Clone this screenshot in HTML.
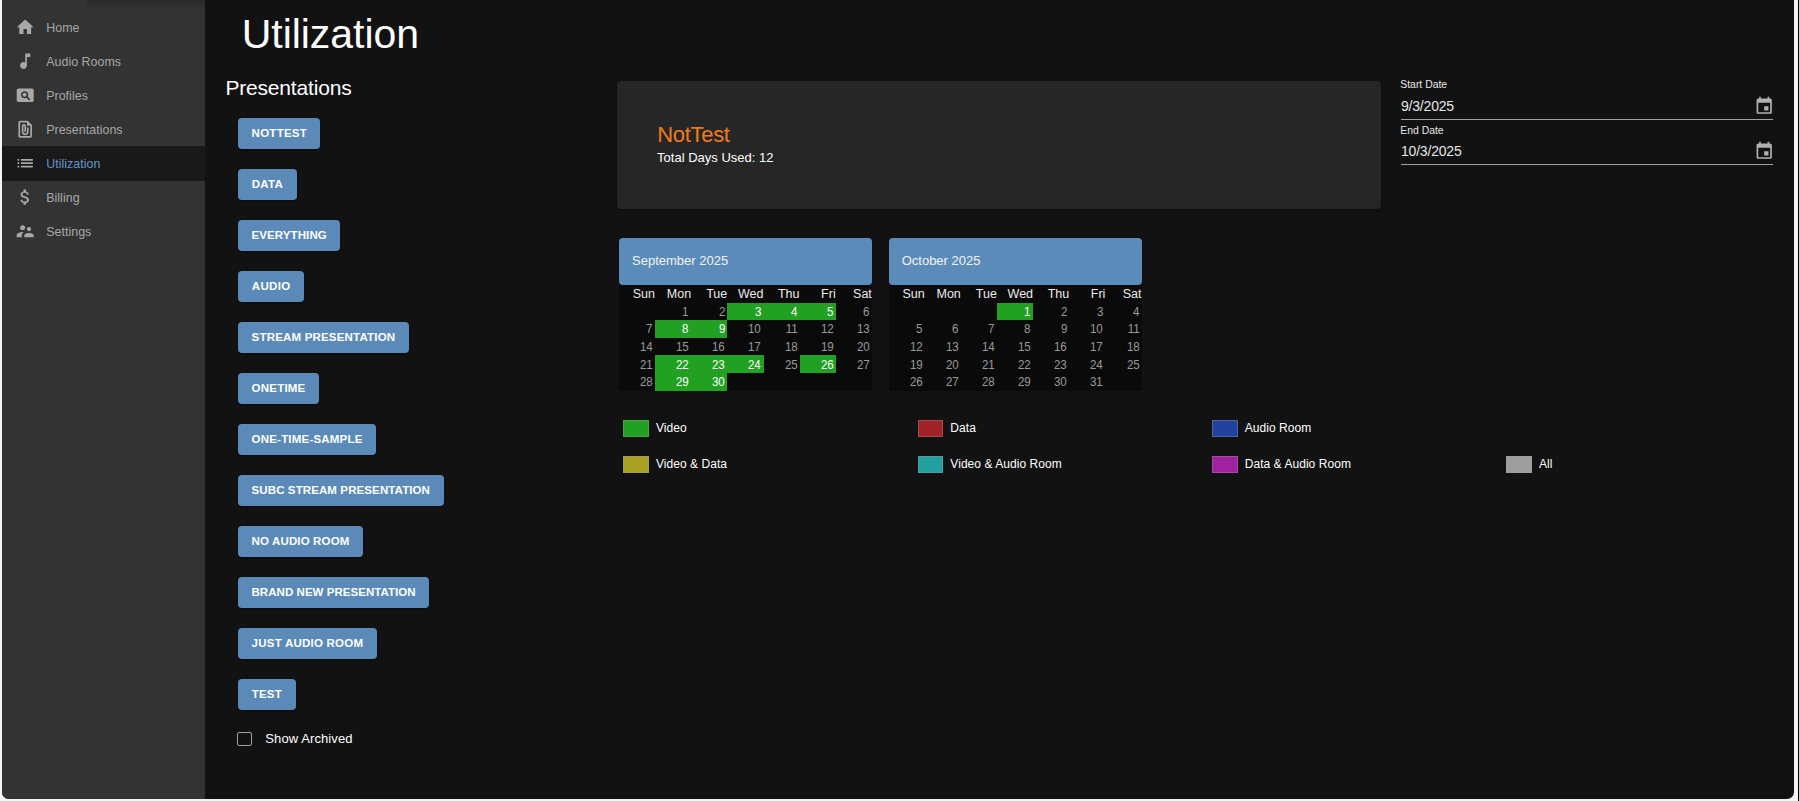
<!DOCTYPE html>
<html><head><meta charset="utf-8"><style>
html,body{margin:0;padding:0;width:1799px;height:801px;overflow:hidden;background:#f4f4f4;font-family:"Liberation Sans", sans-serif}
.t{position:absolute;white-space:nowrap;line-height:1;font-family:"Liberation Sans", sans-serif}
.b{position:absolute}
.btn{position:absolute;left:238px;height:31px;line-height:31px;padding:0;text-align:center;background:#5b8ab8;color:#fff;font-family:"Liberation Sans", sans-serif;font-weight:700;font-size:11.5px;letter-spacing:0.3px;border-radius:4px;white-space:nowrap;box-sizing:border-box;box-shadow:0 1px 2px rgba(0,0,0,.4)}
</style></head><body>
<div class="b" style="left:2.00px;top:-10.00px;width:1792.00px;height:808.50px;background:#121212;border-radius:7px;overflow:hidden"></div>
<div class="b" style="left:2.00px;top:-10.00px;width:203.00px;height:808.50px;background:#333333;border-radius:0 0 0 7px"></div>
<div class="b" style="left:1798.00px;top:0.00px;width:1.00px;height:801.00px;background:#000;"></div>
<div class="b" style="left:87.00px;top:0.00px;width:118.00px;height:9.00px;background:linear-gradient(#292929,rgba(51,51,51,0));"></div>
<svg class="b" style="left:15.20px;top:17.10px" width="20.4" height="20.4" viewBox="0 0 24 24" fill="#a8a8a8"><path d="M10 20v-6h4v6h5v-8h3L12 3 2 12h3v8z"/></svg>
<div class="t" style="left:46.20px;top:21.90px;font-size:12.4px;color:#a8a8a8;font-weight:400;letter-spacing:0.05px;">Home</div>
<svg class="b" style="left:15.20px;top:51.10px" width="20.4" height="20.4" viewBox="0 0 24 24" fill="#a8a8a8"><path d="M12 3v10.55c-.59-.34-1.27-.55-2-.55-2.21 0-4 1.79-4 4s1.79 4 4 4 4-1.79 4-4V7h4V3h-6z"/></svg>
<div class="t" style="left:46.20px;top:55.90px;font-size:12.4px;color:#a8a8a8;font-weight:400;letter-spacing:0.05px;">Audio Rooms</div>
<svg class="b" style="left:15.20px;top:85.10px" width="20.4" height="20.4" viewBox="0 0 24 24" fill="#a8a8a8"><rect x="2" y="4" width="20" height="16" rx="2"/><circle cx="11.3" cy="11.5" r="3.3" fill="none" stroke="#333" stroke-width="1.8"/><path d="M13.8 14l3 3" stroke="#333" stroke-width="1.9" stroke-linecap="round"/></svg>
<div class="t" style="left:46.20px;top:89.90px;font-size:12.4px;color:#a8a8a8;font-weight:400;letter-spacing:0.05px;">Profiles</div>
<svg class="b" style="left:15.20px;top:119.10px" width="20.4" height="20.4" viewBox="0 0 24 24" fill="#a8a8a8"><path d="M15 2H6c-1.1 0-2 .9-2 2v16c0 1.1.9 2 2 2h12c1.1 0 2-.9 2-2V7l-5-5zM6 20V4h8v4h4v12H6zm10-10v5c0 2.21-1.79 4-4 4s-4-1.79-4-4V8.5c0-1.47 1.26-2.64 2.76-2.49 1.3.13 2.24 1.32 2.24 2.63V15h-2V8.5c0-.28-.22-.5-.5-.5s-.5.22-.5.5V15c0 1.1.9 2 2 2s2-.9 2-2v-5h2z"/></svg>
<div class="t" style="left:46.20px;top:123.90px;font-size:12.4px;color:#a8a8a8;font-weight:400;letter-spacing:0.05px;">Presentations</div>
<div class="b" style="left:2.00px;top:146.00px;width:203.00px;height:35.00px;background:#191919;"></div>
<svg class="b" style="left:15.20px;top:153.10px" width="20.4" height="20.4" viewBox="0 0 24 24" fill="#a8a8a8"><path d="M3 13h2v-2H3v2zm0 4h2v-2H3v2zm0-8h2V7H3v2zm4 4h14v-2H7v2zm0 4h14v-2H7v2zM7 7v2h14V7H7z"/></svg>
<div class="t" style="left:46.20px;top:157.90px;font-size:12.4px;color:#6196c9;font-weight:400;letter-spacing:0.05px;">Utilization</div>
<svg class="b" style="left:15.20px;top:187.10px" width="20.4" height="20.4" viewBox="0 0 24 24" fill="#a8a8a8"><path d="M11.8 10.9c-2.27-.59-3-1.2-3-2.15 0-1.09 1.01-1.85 2.7-1.85 1.78 0 2.44.85 2.5 2.1h2.21c-.07-1.72-1.12-3.3-3.21-3.81V3h-3v2.16c-1.94.42-3.5 1.68-3.5 3.61 0 2.31 1.91 3.46 4.7 4.13 2.5.6 3 1.48 3 2.41 0 .69-.49 1.79-2.7 1.79-2.06 0-2.87-.92-2.98-2.1h-2.2c.12 2.19 1.76 3.42 3.68 3.83V21h3v-2.15c1.95-.37 3.5-1.5 3.5-3.55 0-2.84-2.43-3.81-4.7-4.4z"/></svg>
<div class="t" style="left:46.20px;top:191.90px;font-size:12.4px;color:#a8a8a8;font-weight:400;letter-spacing:0.05px;">Billing</div>
<svg class="b" style="left:15.20px;top:221.10px" width="20.4" height="20.4" viewBox="0 0 24 24" fill="#a8a8a8"><path d="M16.5 12c1.38 0 2.49-1.12 2.49-2.5S17.88 7 16.5 7C15.12 7 14 8.12 14 9.5s1.12 2.5 2.5 2.5zM9 11c1.66 0 2.99-1.34 2.99-3S10.66 5 9 5C7.34 5 6 6.34 6 8s1.34 3 3 3zm7.5 3c-1.83 0-5.5.92-5.5 2.75V19h11v-2.25c0-1.83-3.67-2.75-5.5-2.75zM9 13c-2.33 0-7 1.17-7 3.5V19h6v-2.25c0-.85.33-2.34 2.37-3.47C9.5 13.1 8.66 13 9 13z"/></svg>
<div class="t" style="left:46.20px;top:225.90px;font-size:12.4px;color:#a8a8a8;font-weight:400;letter-spacing:0.05px;">Settings</div>
<div class="t" style="left:241.80px;top:13.89px;font-size:41px;color:#ffffff;font-weight:400;letter-spacing:-0.05px;">Utilization</div>
<div class="t" style="left:225.40px;top:77.12px;font-size:21px;color:#ffffff;font-weight:400;letter-spacing:-0.18px;">Presentations</div>
<div class="btn" style="top:118.00px;width:82.4px;letter-spacing:0.247px;text-indent:0.247px">NOTTEST</div>
<div class="btn" style="top:168.96px;width:58.5px;letter-spacing:0.316px;text-indent:0.316px">DATA</div>
<div class="btn" style="top:219.92px;width:102.3px;letter-spacing:0.096px;text-indent:0.096px">EVERYTHING</div>
<div class="btn" style="top:270.88px;width:66px;letter-spacing:0.388px;text-indent:0.388px">AUDIO</div>
<div class="btn" style="top:321.84px;width:170.7px;letter-spacing:0.187px;text-indent:0.187px">STREAM PRESENTATION</div>
<div class="btn" style="top:372.80px;width:80.9px;letter-spacing:0.216px;text-indent:0.216px">ONETIME</div>
<div class="btn" style="top:423.76px;width:138px;letter-spacing:0.201px;text-indent:0.201px">ONE-TIME-SAMPLE</div>
<div class="btn" style="top:474.72px;width:205.5px;letter-spacing:0.107px;text-indent:0.107px">SUBC STREAM PRESENTATION</div>
<div class="btn" style="top:525.68px;width:124.9px;letter-spacing:0.143px;text-indent:0.143px">NO AUDIO ROOM</div>
<div class="btn" style="top:576.64px;width:191.2px;letter-spacing:0.048px;text-indent:0.048px">BRAND NEW PRESENTATION</div>
<div class="btn" style="top:627.60px;width:138.7px;letter-spacing:0.233px;text-indent:0.233px">JUST AUDIO ROOM</div>
<div class="btn" style="top:678.56px;width:57.5px;letter-spacing:0.277px;text-indent:0.277px">TEST</div>
<div class="b" style="left:236.80px;top:731.80px;width:15.20px;height:14.60px;background:transparent;border:1.8px solid #a0a0a0;border-radius:2px;box-sizing:border-box"></div>
<div class="t" style="left:265.30px;top:731.90px;font-size:13px;color:#ffffff;font-weight:400;letter-spacing:0.1px;">Show Archived</div>
<div class="b" style="left:617.00px;top:80.60px;width:764.40px;height:128.00px;background:#262626;border-radius:4px;box-shadow:0 1px 3px rgba(0,0,0,.4)"></div>
<div class="t" style="left:657.20px;top:123.58px;font-size:22px;color:#f07b1c;font-weight:400;letter-spacing:-0.3px;">NotTest</div>
<div class="t" style="left:657.10px;top:150.90px;font-size:13px;color:#ffffff;font-weight:400;letter-spacing:0px;">Total Days Used: 12</div>
<div class="t" style="left:1400.30px;top:79.50px;font-size:10.4px;color:#e6e6e6;font-weight:400;letter-spacing:0px;">Start Date</div>
<div class="t" style="left:1401.00px;top:99.35px;font-size:14px;color:#e6e6e6;font-weight:400;letter-spacing:-0.2px;">9/3/2025</div>
<div class="b" style="left:1401.00px;top:119.00px;width:372.00px;height:1.00px;background:#a0a0a0;"></div>
<svg class="b" style="left:1753.80px;top:95.80px" width="20.4" height="20.4" viewBox="0 0 24 24" fill="#b0b0b0"><path d="M17 12h-5v5h5v-5zM16 1v2H8V1H6v2H5c-1.11 0-1.99.9-1.99 2L3 19c0 1.1.89 2 2 2h14c1.1 0 2-.9 2-2V5c0-1.1-.9-2-2-2h-1V1h-2zm3 18H5V8h14v11z"/></svg>
<div class="t" style="left:1400.30px;top:126.16px;font-size:10.4px;color:#e6e6e6;font-weight:400;letter-spacing:0px;">End Date</div>
<div class="t" style="left:1401.00px;top:144.24px;font-size:14px;color:#e6e6e6;font-weight:400;letter-spacing:-0.2px;">10/3/2025</div>
<div class="b" style="left:1401.00px;top:164.30px;width:372.00px;height:1.00px;background:#a0a0a0;"></div>
<svg class="b" style="left:1753.80px;top:141.10px" width="20.4" height="20.4" viewBox="0 0 24 24" fill="#b0b0b0"><path d="M17 12h-5v5h5v-5zM16 1v2H8V1H6v2H5c-1.11 0-1.99.9-1.99 2L3 19c0 1.1.89 2 2 2h14c1.1 0 2-.9 2-2V5c0-1.1-.9-2-2-2h-1V1h-2zm3 18H5V8h14v11z"/></svg>
<div class="b" style="left:619.00px;top:285.00px;width:253.00px;height:105.60px;background:#0a0a0a;"></div>
<div class="b" style="left:619.00px;top:238.00px;width:253.00px;height:47.00px;background:#5b8cb9;border-radius:4px"></div>
<div class="t" style="left:632.00px;top:254.00px;font-size:13px;color:#f2f2f2;font-weight:400;letter-spacing:0px;">September 2025</div>
<div class="t" style="right:1144.06px;top:287.82px;font-size:12.5px;color:#ececec;font-weight:400;letter-spacing:0px;text-align:right;">Sun</div>
<div class="t" style="right:1107.91px;top:287.82px;font-size:12.5px;color:#ececec;font-weight:400;letter-spacing:0px;text-align:right;">Mon</div>
<div class="t" style="right:1071.77px;top:287.82px;font-size:12.5px;color:#ececec;font-weight:400;letter-spacing:0px;text-align:right;">Tue</div>
<div class="t" style="right:1035.63px;top:287.82px;font-size:12.5px;color:#ececec;font-weight:400;letter-spacing:0px;text-align:right;">Wed</div>
<div class="t" style="right:999.49px;top:287.82px;font-size:12.5px;color:#ececec;font-weight:400;letter-spacing:0px;text-align:right;">Thu</div>
<div class="t" style="right:963.34px;top:287.82px;font-size:12.5px;color:#ececec;font-weight:400;letter-spacing:0px;text-align:right;">Fri</div>
<div class="t" style="right:927.20px;top:287.82px;font-size:12.5px;color:#ececec;font-weight:400;letter-spacing:0px;text-align:right;">Sat</div>
<div class="t" style="right:1110.11px;top:304.84px;font-size:13.3px;color:#9a9a9a;font-weight:400;letter-spacing:0px;text-align:right;transform:scaleX(.87);transform-origin:100% 50%">1</div>
<div class="t" style="right:1073.97px;top:304.84px;font-size:13.3px;color:#9a9a9a;font-weight:400;letter-spacing:0px;text-align:right;transform:scaleX(.87);transform-origin:100% 50%">2</div>
<div class="b" style="left:727.43px;top:302.60px;width:36.14px;height:17.60px;background:#22a022;"></div>
<div class="t" style="right:1037.83px;top:304.84px;font-size:13.3px;color:#ffffff;font-weight:400;letter-spacing:0px;text-align:right;transform:scaleX(.87);transform-origin:100% 50%">3</div>
<div class="b" style="left:763.57px;top:302.60px;width:36.14px;height:17.60px;background:#22a022;"></div>
<div class="t" style="right:1001.69px;top:304.84px;font-size:13.3px;color:#ffffff;font-weight:400;letter-spacing:0px;text-align:right;transform:scaleX(.87);transform-origin:100% 50%">4</div>
<div class="b" style="left:799.71px;top:302.60px;width:36.14px;height:17.60px;background:#22a022;"></div>
<div class="t" style="right:965.54px;top:304.84px;font-size:13.3px;color:#ffffff;font-weight:400;letter-spacing:0px;text-align:right;transform:scaleX(.87);transform-origin:100% 50%">5</div>
<div class="t" style="right:929.40px;top:304.84px;font-size:13.3px;color:#9a9a9a;font-weight:400;letter-spacing:0px;text-align:right;transform:scaleX(.87);transform-origin:100% 50%">6</div>
<div class="t" style="right:1146.26px;top:322.44px;font-size:13.3px;color:#9a9a9a;font-weight:400;letter-spacing:0px;text-align:right;transform:scaleX(.87);transform-origin:100% 50%">7</div>
<div class="b" style="left:655.14px;top:320.20px;width:36.14px;height:17.60px;background:#22a022;"></div>
<div class="t" style="right:1110.11px;top:322.44px;font-size:13.3px;color:#ffffff;font-weight:400;letter-spacing:0px;text-align:right;transform:scaleX(.87);transform-origin:100% 50%">8</div>
<div class="b" style="left:691.29px;top:320.20px;width:36.14px;height:17.60px;background:#22a022;"></div>
<div class="t" style="right:1073.97px;top:322.44px;font-size:13.3px;color:#ffffff;font-weight:400;letter-spacing:0px;text-align:right;transform:scaleX(.87);transform-origin:100% 50%">9</div>
<div class="t" style="right:1037.83px;top:322.44px;font-size:13.3px;color:#9a9a9a;font-weight:400;letter-spacing:0px;text-align:right;transform:scaleX(.87);transform-origin:100% 50%">10</div>
<div class="t" style="right:1001.69px;top:322.44px;font-size:13.3px;color:#9a9a9a;font-weight:400;letter-spacing:0px;text-align:right;transform:scaleX(.87);transform-origin:100% 50%">11</div>
<div class="t" style="right:965.54px;top:322.44px;font-size:13.3px;color:#9a9a9a;font-weight:400;letter-spacing:0px;text-align:right;transform:scaleX(.87);transform-origin:100% 50%">12</div>
<div class="t" style="right:929.40px;top:322.44px;font-size:13.3px;color:#9a9a9a;font-weight:400;letter-spacing:0px;text-align:right;transform:scaleX(.87);transform-origin:100% 50%">13</div>
<div class="t" style="right:1146.26px;top:340.04px;font-size:13.3px;color:#9a9a9a;font-weight:400;letter-spacing:0px;text-align:right;transform:scaleX(.87);transform-origin:100% 50%">14</div>
<div class="t" style="right:1110.11px;top:340.04px;font-size:13.3px;color:#9a9a9a;font-weight:400;letter-spacing:0px;text-align:right;transform:scaleX(.87);transform-origin:100% 50%">15</div>
<div class="t" style="right:1073.97px;top:340.04px;font-size:13.3px;color:#9a9a9a;font-weight:400;letter-spacing:0px;text-align:right;transform:scaleX(.87);transform-origin:100% 50%">16</div>
<div class="t" style="right:1037.83px;top:340.04px;font-size:13.3px;color:#9a9a9a;font-weight:400;letter-spacing:0px;text-align:right;transform:scaleX(.87);transform-origin:100% 50%">17</div>
<div class="t" style="right:1001.69px;top:340.04px;font-size:13.3px;color:#9a9a9a;font-weight:400;letter-spacing:0px;text-align:right;transform:scaleX(.87);transform-origin:100% 50%">18</div>
<div class="t" style="right:965.54px;top:340.04px;font-size:13.3px;color:#9a9a9a;font-weight:400;letter-spacing:0px;text-align:right;transform:scaleX(.87);transform-origin:100% 50%">19</div>
<div class="t" style="right:929.40px;top:340.04px;font-size:13.3px;color:#9a9a9a;font-weight:400;letter-spacing:0px;text-align:right;transform:scaleX(.87);transform-origin:100% 50%">20</div>
<div class="t" style="right:1146.26px;top:357.64px;font-size:13.3px;color:#9a9a9a;font-weight:400;letter-spacing:0px;text-align:right;transform:scaleX(.87);transform-origin:100% 50%">21</div>
<div class="b" style="left:655.14px;top:355.40px;width:36.14px;height:17.60px;background:#22a022;"></div>
<div class="t" style="right:1110.11px;top:357.64px;font-size:13.3px;color:#ffffff;font-weight:400;letter-spacing:0px;text-align:right;transform:scaleX(.87);transform-origin:100% 50%">22</div>
<div class="b" style="left:691.29px;top:355.40px;width:36.14px;height:17.60px;background:#22a022;"></div>
<div class="t" style="right:1073.97px;top:357.64px;font-size:13.3px;color:#ffffff;font-weight:400;letter-spacing:0px;text-align:right;transform:scaleX(.87);transform-origin:100% 50%">23</div>
<div class="b" style="left:727.43px;top:355.40px;width:36.14px;height:17.60px;background:#22a022;"></div>
<div class="t" style="right:1037.83px;top:357.64px;font-size:13.3px;color:#ffffff;font-weight:400;letter-spacing:0px;text-align:right;transform:scaleX(.87);transform-origin:100% 50%">24</div>
<div class="t" style="right:1001.69px;top:357.64px;font-size:13.3px;color:#9a9a9a;font-weight:400;letter-spacing:0px;text-align:right;transform:scaleX(.87);transform-origin:100% 50%">25</div>
<div class="b" style="left:799.71px;top:355.40px;width:36.14px;height:17.60px;background:#22a022;"></div>
<div class="t" style="right:965.54px;top:357.64px;font-size:13.3px;color:#ffffff;font-weight:400;letter-spacing:0px;text-align:right;transform:scaleX(.87);transform-origin:100% 50%">26</div>
<div class="t" style="right:929.40px;top:357.64px;font-size:13.3px;color:#9a9a9a;font-weight:400;letter-spacing:0px;text-align:right;transform:scaleX(.87);transform-origin:100% 50%">27</div>
<div class="t" style="right:1146.26px;top:375.24px;font-size:13.3px;color:#9a9a9a;font-weight:400;letter-spacing:0px;text-align:right;transform:scaleX(.87);transform-origin:100% 50%">28</div>
<div class="b" style="left:655.14px;top:373.00px;width:36.14px;height:17.60px;background:#22a022;"></div>
<div class="t" style="right:1110.11px;top:375.24px;font-size:13.3px;color:#ffffff;font-weight:400;letter-spacing:0px;text-align:right;transform:scaleX(.87);transform-origin:100% 50%">29</div>
<div class="b" style="left:691.29px;top:373.00px;width:36.14px;height:17.60px;background:#22a022;"></div>
<div class="t" style="right:1073.97px;top:375.24px;font-size:13.3px;color:#ffffff;font-weight:400;letter-spacing:0px;text-align:right;transform:scaleX(.87);transform-origin:100% 50%">30</div>
<div class="b" style="left:888.70px;top:285.00px;width:253.00px;height:105.60px;background:#0a0a0a;"></div>
<div class="b" style="left:888.70px;top:238.00px;width:253.00px;height:47.00px;background:#5b8cb9;border-radius:4px"></div>
<div class="t" style="left:901.70px;top:254.00px;font-size:13px;color:#f2f2f2;font-weight:400;letter-spacing:0px;">October 2025</div>
<div class="t" style="right:874.36px;top:287.82px;font-size:12.5px;color:#ececec;font-weight:400;letter-spacing:0px;text-align:right;">Sun</div>
<div class="t" style="right:838.21px;top:287.82px;font-size:12.5px;color:#ececec;font-weight:400;letter-spacing:0px;text-align:right;">Mon</div>
<div class="t" style="right:802.07px;top:287.82px;font-size:12.5px;color:#ececec;font-weight:400;letter-spacing:0px;text-align:right;">Tue</div>
<div class="t" style="right:765.93px;top:287.82px;font-size:12.5px;color:#ececec;font-weight:400;letter-spacing:0px;text-align:right;">Wed</div>
<div class="t" style="right:729.79px;top:287.82px;font-size:12.5px;color:#ececec;font-weight:400;letter-spacing:0px;text-align:right;">Thu</div>
<div class="t" style="right:693.64px;top:287.82px;font-size:12.5px;color:#ececec;font-weight:400;letter-spacing:0px;text-align:right;">Fri</div>
<div class="t" style="right:657.50px;top:287.82px;font-size:12.5px;color:#ececec;font-weight:400;letter-spacing:0px;text-align:right;">Sat</div>
<div class="b" style="left:997.13px;top:302.60px;width:36.14px;height:17.60px;background:#22a022;"></div>
<div class="t" style="right:768.13px;top:304.84px;font-size:13.3px;color:#ffffff;font-weight:400;letter-spacing:0px;text-align:right;transform:scaleX(.87);transform-origin:100% 50%">1</div>
<div class="t" style="right:731.99px;top:304.84px;font-size:13.3px;color:#9a9a9a;font-weight:400;letter-spacing:0px;text-align:right;transform:scaleX(.87);transform-origin:100% 50%">2</div>
<div class="t" style="right:695.84px;top:304.84px;font-size:13.3px;color:#9a9a9a;font-weight:400;letter-spacing:0px;text-align:right;transform:scaleX(.87);transform-origin:100% 50%">3</div>
<div class="t" style="right:659.70px;top:304.84px;font-size:13.3px;color:#9a9a9a;font-weight:400;letter-spacing:0px;text-align:right;transform:scaleX(.87);transform-origin:100% 50%">4</div>
<div class="t" style="right:876.56px;top:322.44px;font-size:13.3px;color:#9a9a9a;font-weight:400;letter-spacing:0px;text-align:right;transform:scaleX(.87);transform-origin:100% 50%">5</div>
<div class="t" style="right:840.41px;top:322.44px;font-size:13.3px;color:#9a9a9a;font-weight:400;letter-spacing:0px;text-align:right;transform:scaleX(.87);transform-origin:100% 50%">6</div>
<div class="t" style="right:804.27px;top:322.44px;font-size:13.3px;color:#9a9a9a;font-weight:400;letter-spacing:0px;text-align:right;transform:scaleX(.87);transform-origin:100% 50%">7</div>
<div class="t" style="right:768.13px;top:322.44px;font-size:13.3px;color:#9a9a9a;font-weight:400;letter-spacing:0px;text-align:right;transform:scaleX(.87);transform-origin:100% 50%">8</div>
<div class="t" style="right:731.99px;top:322.44px;font-size:13.3px;color:#9a9a9a;font-weight:400;letter-spacing:0px;text-align:right;transform:scaleX(.87);transform-origin:100% 50%">9</div>
<div class="t" style="right:695.84px;top:322.44px;font-size:13.3px;color:#9a9a9a;font-weight:400;letter-spacing:0px;text-align:right;transform:scaleX(.87);transform-origin:100% 50%">10</div>
<div class="t" style="right:659.70px;top:322.44px;font-size:13.3px;color:#9a9a9a;font-weight:400;letter-spacing:0px;text-align:right;transform:scaleX(.87);transform-origin:100% 50%">11</div>
<div class="t" style="right:876.56px;top:340.04px;font-size:13.3px;color:#9a9a9a;font-weight:400;letter-spacing:0px;text-align:right;transform:scaleX(.87);transform-origin:100% 50%">12</div>
<div class="t" style="right:840.41px;top:340.04px;font-size:13.3px;color:#9a9a9a;font-weight:400;letter-spacing:0px;text-align:right;transform:scaleX(.87);transform-origin:100% 50%">13</div>
<div class="t" style="right:804.27px;top:340.04px;font-size:13.3px;color:#9a9a9a;font-weight:400;letter-spacing:0px;text-align:right;transform:scaleX(.87);transform-origin:100% 50%">14</div>
<div class="t" style="right:768.13px;top:340.04px;font-size:13.3px;color:#9a9a9a;font-weight:400;letter-spacing:0px;text-align:right;transform:scaleX(.87);transform-origin:100% 50%">15</div>
<div class="t" style="right:731.99px;top:340.04px;font-size:13.3px;color:#9a9a9a;font-weight:400;letter-spacing:0px;text-align:right;transform:scaleX(.87);transform-origin:100% 50%">16</div>
<div class="t" style="right:695.84px;top:340.04px;font-size:13.3px;color:#9a9a9a;font-weight:400;letter-spacing:0px;text-align:right;transform:scaleX(.87);transform-origin:100% 50%">17</div>
<div class="t" style="right:659.70px;top:340.04px;font-size:13.3px;color:#9a9a9a;font-weight:400;letter-spacing:0px;text-align:right;transform:scaleX(.87);transform-origin:100% 50%">18</div>
<div class="t" style="right:876.56px;top:357.64px;font-size:13.3px;color:#9a9a9a;font-weight:400;letter-spacing:0px;text-align:right;transform:scaleX(.87);transform-origin:100% 50%">19</div>
<div class="t" style="right:840.41px;top:357.64px;font-size:13.3px;color:#9a9a9a;font-weight:400;letter-spacing:0px;text-align:right;transform:scaleX(.87);transform-origin:100% 50%">20</div>
<div class="t" style="right:804.27px;top:357.64px;font-size:13.3px;color:#9a9a9a;font-weight:400;letter-spacing:0px;text-align:right;transform:scaleX(.87);transform-origin:100% 50%">21</div>
<div class="t" style="right:768.13px;top:357.64px;font-size:13.3px;color:#9a9a9a;font-weight:400;letter-spacing:0px;text-align:right;transform:scaleX(.87);transform-origin:100% 50%">22</div>
<div class="t" style="right:731.99px;top:357.64px;font-size:13.3px;color:#9a9a9a;font-weight:400;letter-spacing:0px;text-align:right;transform:scaleX(.87);transform-origin:100% 50%">23</div>
<div class="t" style="right:695.84px;top:357.64px;font-size:13.3px;color:#9a9a9a;font-weight:400;letter-spacing:0px;text-align:right;transform:scaleX(.87);transform-origin:100% 50%">24</div>
<div class="t" style="right:659.70px;top:357.64px;font-size:13.3px;color:#9a9a9a;font-weight:400;letter-spacing:0px;text-align:right;transform:scaleX(.87);transform-origin:100% 50%">25</div>
<div class="t" style="right:876.56px;top:375.24px;font-size:13.3px;color:#9a9a9a;font-weight:400;letter-spacing:0px;text-align:right;transform:scaleX(.87);transform-origin:100% 50%">26</div>
<div class="t" style="right:840.41px;top:375.24px;font-size:13.3px;color:#9a9a9a;font-weight:400;letter-spacing:0px;text-align:right;transform:scaleX(.87);transform-origin:100% 50%">27</div>
<div class="t" style="right:804.27px;top:375.24px;font-size:13.3px;color:#9a9a9a;font-weight:400;letter-spacing:0px;text-align:right;transform:scaleX(.87);transform-origin:100% 50%">28</div>
<div class="t" style="right:768.13px;top:375.24px;font-size:13.3px;color:#9a9a9a;font-weight:400;letter-spacing:0px;text-align:right;transform:scaleX(.87);transform-origin:100% 50%">29</div>
<div class="t" style="right:731.99px;top:375.24px;font-size:13.3px;color:#9a9a9a;font-weight:400;letter-spacing:0px;text-align:right;transform:scaleX(.87);transform-origin:100% 50%">30</div>
<div class="t" style="right:695.84px;top:375.24px;font-size:13.3px;color:#9a9a9a;font-weight:400;letter-spacing:0px;text-align:right;transform:scaleX(.87);transform-origin:100% 50%">31</div>
<div class="b" style="left:623.20px;top:419.80px;width:25.70px;height:16.80px;background:#22a022;box-shadow:inset 0 0 0 1px rgba(160,160,160,.35)"></div>
<div class="t" style="left:656.00px;top:422.04px;font-size:12px;color:#ffffff;font-weight:400;letter-spacing:0.05px;">Video</div>
<div class="b" style="left:917.55px;top:419.80px;width:25.70px;height:16.80px;background:#a02226;box-shadow:inset 0 0 0 1px rgba(160,160,160,.35)"></div>
<div class="t" style="left:950.35px;top:422.04px;font-size:12px;color:#ffffff;font-weight:400;letter-spacing:0.05px;">Data</div>
<div class="b" style="left:1211.90px;top:419.80px;width:25.70px;height:16.80px;background:#2242a0;box-shadow:inset 0 0 0 1px rgba(160,160,160,.35)"></div>
<div class="t" style="left:1244.70px;top:422.04px;font-size:12px;color:#ffffff;font-weight:400;letter-spacing:0.05px;">Audio Room</div>
<div class="b" style="left:623.20px;top:456.20px;width:25.70px;height:16.80px;background:#a8a022;box-shadow:inset 0 0 0 1px rgba(160,160,160,.35)"></div>
<div class="t" style="left:656.00px;top:458.44px;font-size:12px;color:#ffffff;font-weight:400;letter-spacing:0.05px;">Video &amp; Data</div>
<div class="b" style="left:917.55px;top:456.20px;width:25.70px;height:16.80px;background:#22a0a0;box-shadow:inset 0 0 0 1px rgba(160,160,160,.35)"></div>
<div class="t" style="left:950.35px;top:458.44px;font-size:12px;color:#ffffff;font-weight:400;letter-spacing:0.05px;">Video &amp; Audio Room</div>
<div class="b" style="left:1211.90px;top:456.20px;width:25.70px;height:16.80px;background:#a022a0;box-shadow:inset 0 0 0 1px rgba(160,160,160,.35)"></div>
<div class="t" style="left:1244.70px;top:458.44px;font-size:12px;color:#ffffff;font-weight:400;letter-spacing:0.05px;">Data &amp; Audio Room</div>
<div class="b" style="left:1506.25px;top:456.20px;width:25.70px;height:16.80px;background:#9e9e9e;box-shadow:inset 0 0 0 1px rgba(160,160,160,.35)"></div>
<div class="t" style="left:1539.05px;top:458.44px;font-size:12px;color:#ffffff;font-weight:400;letter-spacing:0.05px;">All</div>
</body></html>
